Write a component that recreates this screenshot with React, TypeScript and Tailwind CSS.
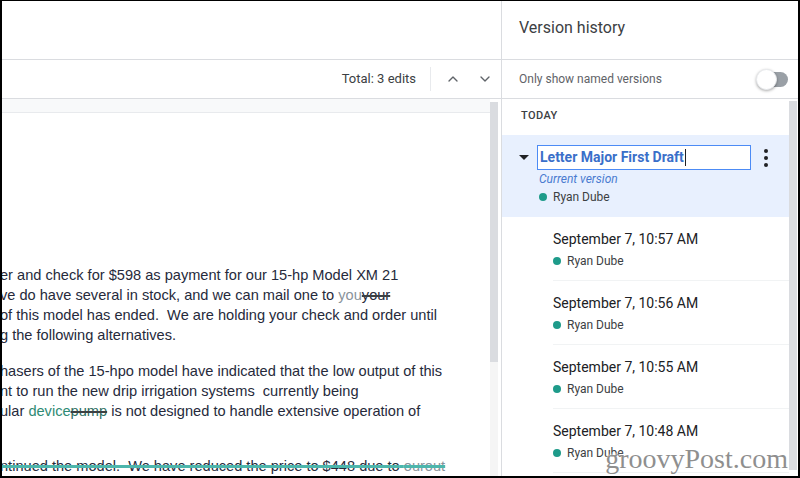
import { ChevronDown, ChevronUp } from 'lucide-react';

const versions = [
	'September 7, 10:57 AM',
	'September 7, 10:56 AM',
	'September 7, 10:55 AM',
	'September 7, 10:48 AM',
];

const strikeDark = 'line-through decoration-[#3c4043] decoration-[1.5px]';
const strikeTeal = 'line-through decoration-[#4db6ac] decoration-[3px]';

function Author() {
	return (
		<div className="flex items-center gap-[6px] text-[12px] leading-[18px] text-[#3c4043]">
			<span className="inline-block h-[8px] w-[8px] rounded-full bg-[#1e9b8a]" />
			Ryan Dube
		</div>
	);
}

function DocText() {
	return (
		<div className="-ml-[2px] font-['Liberation_Sans',Arial,sans-serif] text-[14.6px] leading-[20px] whitespace-nowrap text-[#262a3b]">
			<div className="mt-[152px]">er and check for $598 as payment for our 15-hp Model XM 21</div>
			<div>
				ve do have several in stock, and we can mail one to{' '}
				<span className="text-[#8a939b]">you</span>
				<span className={strikeDark}>your</span>
			</div>
			<div>of this model has ended.&nbsp; We are holding your check and order until</div>
			<div>g the following alternatives.</div>
			<div className="mt-[16px]">hasers of the 15-hpo model have indicated that the low output of this</div>
			<div>nt to run the new drip irrigation systems&nbsp; currently being</div>
			<div>
				ular <span className="text-[#2f8a74]">device</span>
				<span className={`${strikeDark} text-[#2f6f62]`}>pump</span> is not designed to
				handle extensive operation of
			</div>
			<div className={`mt-[35px] ${strikeTeal}`}>
				ntinued the model.&nbsp; We have reduced the price to $448 due to{' '}
				<span className="text-[#8a939b]">ourout</span>
			</div>
		</div>
	);
}

export default function App() {
	return (
		<div className="relative flex h-[478px] w-[800px] overflow-hidden border-x-2 border-t border-b-2 border-black bg-white font-['Roboto',Arial,sans-serif]">
			{/* document side */}
			<div className="flex w-[499px] flex-col">
				<div className="h-[59px] border-b border-[#dadce0]" />
				<div className="flex h-[39px] items-center justify-end border-b border-[#dadce0] pr-[8px]">
					<span className="text-[13px] text-[#3c4043]">Total: 3 edits</span>
					<span className="mx-[14px] h-[24px] w-px bg-[#e8eaed]" />
					<ChevronUp size={16} strokeWidth={2} className="text-[#5f6368]" />
					<ChevronDown size={16} strokeWidth={2} className="ml-[16px] text-[#5f6368]" />
				</div>
				<div className="flex min-h-0 flex-1 bg-[#f8f9fa]">
					<div className="flex min-w-0 flex-1 flex-col">
						<div className="h-[14px] border-b border-[#e8eaed]" />
						<div className="min-h-0 flex-1 overflow-hidden bg-white">
							<DocText />
						</div>
					</div>
					<div className="flex w-[11px] flex-col bg-white pt-[3px] pr-[2px]">
						<div className="h-[260px] w-[8px] bg-[#dadce0]" />
						<div className="w-[8px] flex-1 bg-[#f5f5f5]" />
					</div>
				</div>
			</div>

			{/* version history side */}
			<div className="flex flex-1 flex-col border-l border-[#dadce0]">
				<div className="flex h-[59px] items-center border-b border-[#dadce0] pb-[4px] pl-[17px] text-[16px] text-[#3c4043]">
					Version history
				</div>
				<div className="flex h-[39px] items-center justify-between border-b border-[#dadce0] pr-[10px] pl-[17px]">
					<span className="text-[12px] text-[#5f6368]">Only show named versions</span>
					<div className="relative h-[15px] w-[32px]">
						<div className="absolute top-0 right-0 h-[15px] w-[26px] rounded-full bg-[#9aa0a6]" />
						<div className="absolute -top-[3px] left-0 h-[21px] w-[21px] rounded-full border border-[#e8eaed] bg-white shadow-[0_1px_3px_rgba(0,0,0,0.35)]" />
					</div>
				</div>
				<div className="flex min-h-0 flex-1">
					<div className="min-w-0 flex-1">
						<div className="h-[36px] pt-[9px] pl-[19px] text-[11px] font-medium tracking-[0.4px] text-[#3c4043]">
							TODAY
						</div>
						<div className="bg-[#e8f0fe] pt-[10px] pb-[11px]">
							<div className="flex items-center">
								<span className="ml-[17px] h-0 w-0 border-x-[5px] border-t-[5px] border-x-transparent border-t-[#202124]" />
								<div className="ml-[8px] flex h-[25px] w-[214px] items-center border border-[#4c8bf5] bg-white px-[2px] text-[14px] font-bold text-[#3a6fc9]">
									Letter Major First Draft
									<span className="ml-[1px] h-[17px] w-px bg-[#202124]" />
								</div>
								<div className="ml-[13px] flex flex-col gap-[3px]">
									<span className="h-[4px] w-[4px] rounded-full bg-[#202124]" />
									<span className="h-[4px] w-[4px] rounded-full bg-[#202124]" />
									<span className="h-[4px] w-[4px] rounded-full bg-[#202124]" />
								</div>
							</div>
							<div className="pl-[37px]">
								<div className="mt-[1px] text-[12px] leading-[16px] text-[#4a7bd0] italic">
									Current version
								</div>
								<div className="mt-[1px]">
									<Author />
								</div>
							</div>
						</div>
						<div className="pl-[51px]">
							{versions.map((v) => (
								<div key={v} className="border-b border-[#f1f3f4] pt-[12px] pb-[10px]">
									<div className="text-[14px] leading-[20px] text-[#202124]">{v}</div>
									<div className="mt-[3px]">
										<Author />
									</div>
								</div>
							))}
						</div>
					</div>
					<div className="w-[9px] pt-[2px] pb-[6px]">
						<div className="h-full w-[8px] bg-[#dadce0]" />
					</div>
				</div>
			</div>

			<div
				aria-hidden
				className="absolute right-[10px] bottom-[3px] font-['Liberation_Serif',serif] text-[28px] leading-none text-[#8f8f8f] [text-shadow:0_0_2px_#fff,0_0_2px_#fff]"
			>
				groovyPost.com
			</div>
		</div>
	);
}
